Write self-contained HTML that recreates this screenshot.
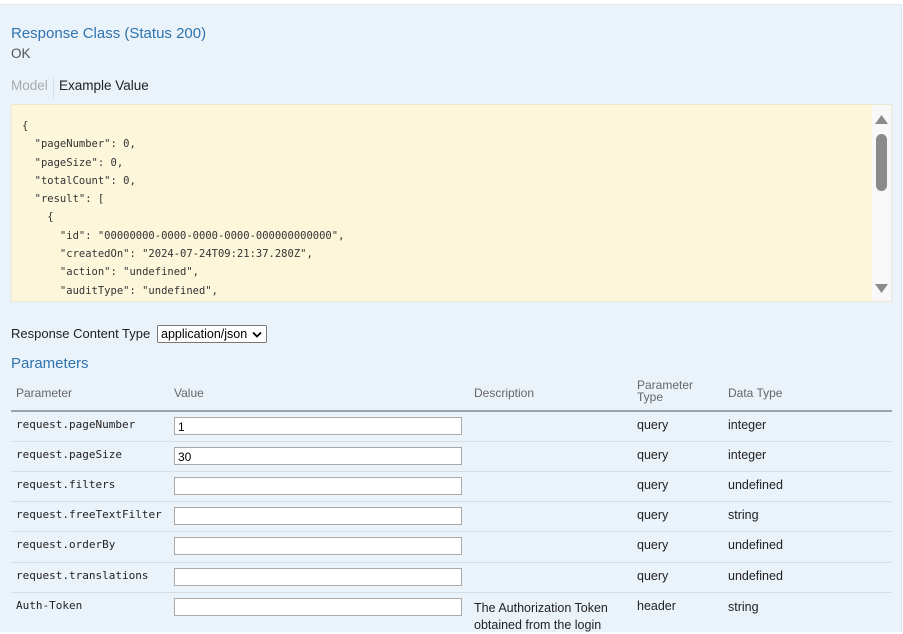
<!DOCTYPE html>
<html><head><style>
*{margin:0;padding:0;box-sizing:border-box}
body{width:903px;height:632px;overflow:hidden;background:#fff;font-family:"Liberation Sans",sans-serif;position:relative}
.panel{position:absolute;left:0;top:4px;width:902px;height:628px;background:#ebf3fa;border-right:1px solid #dbe4ec;border-top:1px solid #e4e8ec}
.a{position:absolute;white-space:nowrap}
.h{color:#2e73b0;font-size:15px}
.code{position:absolute;left:11px;top:104px;width:881px;height:198px;background:#fcf6db;border:1px solid #ece8d5}
.code pre{position:absolute;left:10px;top:12px;font-family:"DejaVu Sans Mono","Liberation Mono",monospace;font-size:10.5px;line-height:18.3px;color:#333}
.sb{position:absolute;right:0;top:0;width:19px;height:196px;background:#f8f8f8}
.th{position:absolute;font-size:12px;color:#666}
.row{position:absolute;left:11px;width:881px;height:30px;border-top:1px solid #d6dde3}
.pn{position:absolute;left:5px;top:6px;font-family:"DejaVu Sans Mono","Liberation Mono",monospace;font-size:11px;color:#222}
.in{position:absolute;left:163px;top:5px;width:288px;height:18px;background:#fff;border:1px solid #a9a9a9;font-size:12px;padding:2px 3px;color:#000}
.pt{position:absolute;left:626px;top:6px;font-size:12.5px;color:#222}
.dt{position:absolute;left:717px;top:6px;font-size:12.5px;color:#222}
</style></head><body>
<div class="panel"></div>
<div class="a h" style="left:11px;top:25px">Response Class (Status 200)</div>
<div class="a" style="left:11px;top:46px;font-size:13.5px;color:#555">OK</div>
<div class="a" style="left:11px;top:78px;font-size:13.5px;color:#aaa">Model</div>
<div class="a" style="left:53px;top:78px;width:1px;height:20px;background:#d8dde2"></div>
<div class="a" style="left:59px;top:78px;font-size:13.5px;color:#222">Example Value</div>
<div class="code"><pre>{
  "pageNumber": 0,
  "pageSize": 0,
  "totalCount": 0,
  "result": [
    {
      "id": "00000000-0000-0000-0000-000000000000",
      "createdOn": "2024-07-24T09:21:37.280Z",
      "action": "undefined",
      "auditType": "undefined",</pre>
<div class="sb">
<svg width="19" height="196" style="position:absolute;left:0;top:0"><path d="M3 19 L9.5 10 L16 19Z" fill="#8a8a8a"/><rect x="4" y="29" width="11" height="57" rx="5.5" fill="#8a8a8a"/><path d="M3 179 L9.5 188 L16 179Z" fill="#8a8a8a"/></svg></div></div>
<div class="a" style="left:11px;top:326px;font-size:13px;color:#222">Response Content Type</div>
<div class="a" style="left:157px;top:325px;width:110px;height:18px;border:1px solid #777;border-radius:2px;background:#fff;font-size:12.5px;padding:1px 3px;color:#000">application/json <svg width="10" height="8" style="position:absolute;right:4px;top:5px"><path d="M1 1.5 L5 5.5 L9 1.5" stroke="#000" stroke-width="1.8" fill="none"/></svg></div>
<div class="a h" style="left:11px;top:355px">Parameters</div>
<div class="th" style="left:16px;top:386px">Parameter</div>
<div class="th" style="left:174px;top:386px">Value</div>
<div class="th" style="left:474px;top:386px">Description</div>
<div class="th" style="left:637px;top:379px;line-height:12px">Parameter<br>Type</div>
<div class="th" style="left:728px;top:386px">Data Type</div>
<div class="row" style="top:410px;border-top:2px solid #9aa3ab"><div class="pn">request.pageNumber</div><div class="in">1</div><div class="pt">query</div><div class="dt">integer</div></div>
<div class="row" style="top:441px"><div class="pn">request.pageSize</div><div class="in">30</div><div class="pt">query</div><div class="dt">integer</div></div>
<div class="row" style="top:471px"><div class="pn">request.filters</div><div class="in"></div><div class="pt">query</div><div class="dt">undefined</div></div>
<div class="row" style="top:501px"><div class="pn">request.freeTextFilter</div><div class="in"></div><div class="pt">query</div><div class="dt">string</div></div>
<div class="row" style="top:531px"><div class="pn">request.orderBy</div><div class="in"></div><div class="pt">query</div><div class="dt">undefined</div></div>
<div class="row" style="top:562px"><div class="pn">request.translations</div><div class="in"></div><div class="pt">query</div><div class="dt">undefined</div></div>
<div class="row" style="top:592px;height:40px"><div class="pn">Auth-Token</div><div class="in"></div><div class="a" style="left:463px;top:7px;font-size:12.5px;color:#222;line-height:17px">The Authorization Token<br>obtained from the login</div><div class="pt">header</div><div class="dt" style="top:7px">string</div></div>
</body></html>
